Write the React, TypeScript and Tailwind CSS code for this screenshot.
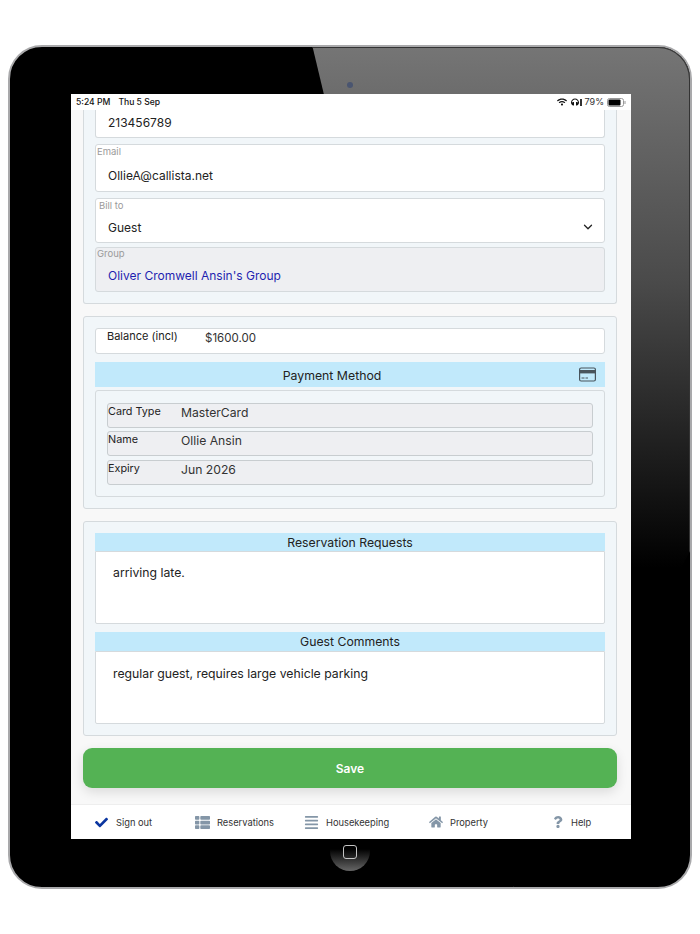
import { ChevronDown } from 'lucide-react'
import { FaAlignJustify, FaCheck, FaHeadphones, FaHome, FaQuestion, FaThList, FaWifi } from 'react-icons/fa'

function Field({ label, value, box, labelPos, textPos, gray, link, chevron }: { label: string; value: string; box: string; labelPos: string; textPos: string; gray?: boolean; link?: boolean; chevron?: boolean }) {
  return (
    <div className={`${box} relative rounded-[3px] border border-[#d5dadd] ${gray ? 'bg-[#eeeff2]' : 'bg-white'}`}>
      <div className={`${labelPos} text-[9.5px] leading-[12px] text-[#9a9a9a]`}>{label}</div>
      <div className={`${textPos} pl-[12px] text-[12px] leading-[18px] ${link ? 'text-[#1f1fb0]' : 'text-[#222]'}`}>{value}</div>
      {chevron && <ChevronDown className="absolute right-[9px] top-[21px] text-[#222]" size={14} strokeWidth={2.2} />}
    </div>
  )
}

function CardRow({ label, value, mt }: { label: string; value: string; mt: string }) {
  return (
    <div className={`${mt} flex h-[25px] rounded-[3px] border border-[#c8cdd0] bg-[#eeeff2] pt-[1px]`}>
      <div className="w-[73px] text-[10.8px] leading-[14px] text-[#222]">{label}</div>
      <div className="text-[12.2px] leading-[16px] text-[#333]">{value}</div>
    </div>
  )
}

function NavItem({ icon, label, w }: { icon: React.ReactNode; label: string; w: string }) {
  return (
    <div className={`flex items-center ${w}`}>
      {icon}
      <span className="pt-[1px] text-[9.3px] text-[#333]">{label}</span>
    </div>
  )
}

export default function App() {
  return (
    <div className="h-[934px] w-[700px] overflow-hidden bg-white pl-[8px] pt-[45px] font-['Inter',sans-serif]">
      {/* Tablet body */}
      <div className="relative h-[844px] w-[684px] rounded-[34px] border-[2px] border-[#a9a9ab] bg-black pl-[61px] pt-[47px]">
        <div
          className="absolute inset-0 rounded-[32px] shadow-[inset_0_0_0_1px_#333] [clip-path:polygon(44.5%_0,100%_0,100%_60%,74%_100%)] bg-[linear-gradient(180deg,#757575_0%,#4a4a4a_28%,#000_62%)]"
        />
        <div className="absolute left-[337px] top-[35px] size-[6px] rounded-full bg-[#4a5570]" />

        {/* Home button, its top edge goes behind the screen */}
        <div className="absolute left-[320px] top-[784px] flex size-[40px] items-center justify-center rounded-full bg-[linear-gradient(180deg,#000_45%,#666_100%)]">
          <div className="mt-[2px] size-[14px] rounded-[3px] border-[1.5px] border-[#c4c4c4]" />
        </div>

        {/* Screen */}
        <div className="relative flex h-[745px] w-[560px] flex-col overflow-hidden bg-[#f8f8f8]">
          <div className="flex h-[16px] shrink-0 items-center justify-between bg-white px-[5px] text-[8.6px] font-medium text-[#111]">
            <div className="flex gap-[8px]">
              <span>5:24 PM</span>
              <span>Thu 5 Sep</span>
            </div>
            <div className="flex items-center gap-[3px]">
              <FaWifi size={10} />
              <div className="ml-[1px] flex w-[11px] items-center gap-[1px]">
                <FaHeadphones size={8} />
                <div className="h-[7px] w-[2px] bg-[#333]" />
              </div>
              <span className="text-[9px] font-normal text-[#333]">79%</span>
              <svg width="19" height="9" viewBox="0 0 19 9">
                <rect x="0.5" y="0.5" width="16" height="8" rx="2" fill="none" stroke="#999" />
                <rect x="1.5" y="1.5" width="12" height="6" rx="1" fill="#000" />
                <rect x="17.5" y="3" width="1" height="3" fill="#999" />
              </svg>
            </div>
          </div>

          <div className="ml-[12px] mr-[14px] flex-1">
            {/* Contact card */}
            <div className="h-[194px] rounded-b-[3px] border-x border-b border-[#d5dadd] bg-[#f1f6f9] px-[11px]">
              <div className="h-[28px] rounded-b-[3px] border-x border-b border-[#d5dadd] bg-white pl-[12px] text-[12px] leading-[25px] text-[#222]">213456789</div>
              <Field box="mt-[6px] h-[48px]" labelPos="pl-[1px] pt-[1px]" textPos="pt-[9px]" label="Email" value="OllieA@callista.net" />
              <Field box="mt-[6px] h-[45px]" labelPos="pl-[3px] pt-[1px]" textPos="pt-[7px]" label="Bill to" value="Guest" chevron />
              <Field box="mt-[4px] h-[45px]" labelPos="pl-[1px]" textPos="pt-[7px]" label="Group" value="Oliver Cromwell Ansin's Group" gray link />
            </div>

            {/* Payment card */}
            <div className="mt-[12px] h-[193px] rounded-[3px] border border-[#d5dadd] bg-[#f1f6f9] px-[11px] pt-[11px]">
              <div className="flex h-[26px] rounded-[3px] border border-[#d5dadd] bg-white">
                <div className="w-[109px] pl-[11px] text-[11px] leading-[14px] text-[#222]">Balance (incl)</div>
                <div className="pt-[1px] text-[11.5px] leading-[16px] text-[#333]">$1600.00</div>
              </div>
              <div className="relative mt-[8px] h-[25px] bg-[#c1e9fb] pr-[36px] pt-[1px] text-center text-[12.3px] leading-[25px] text-[#222]">
                Payment Method
                <svg className="absolute right-[9px] top-[5px]" width="17" height="15" viewBox="0 0 17 15">
                  <rect x="0.6" y="1" width="15.8" height="13" rx="1.5" fill="none" stroke="#48545c" strokeWidth="1.2" />
                  <rect x="0.6" y="3" width="15.8" height="3.4" fill="#48545c" />
                  <path d="M2.5 11h3M6.5 11h2.5" stroke="#48545c" strokeWidth="1" />
                </svg>
              </div>
              <div className="mt-[3px] h-[107px] rounded-[3px] border border-[#d5dadd] px-[11px] pt-[12px]">
                <CardRow mt="mt-0" label="Card Type" value="MasterCard" />
                <CardRow mt="mt-[3px]" label="Name" value="Ollie Ansin" />
                <CardRow mt="mt-[4px]" label="Expiry" value="Jun 2026" />
              </div>
            </div>

            {/* Notes card */}
            <div className="mt-[12px] h-[215px] rounded-[3px] border border-[#d5dadd] bg-[#f1f6f9] px-[11px] pt-[11px]">
              <div className="h-[18px] bg-[#c1e9fb] pt-[1px] text-center text-[12.25px] leading-[18px] text-[#222]">Reservation Requests</div>
              <div className="h-[73px] rounded-b-[2px] border border-[#d5dadd] bg-white pl-[17px] pt-[12px] text-[12.25px] leading-[18px] text-[#222]">arriving late.</div>
              <div className="mt-[8px] h-[19px] bg-[#c1e9fb] text-center text-[12.25px] leading-[19px] text-[#222]">Guest Comments</div>
              <div className="h-[73px] rounded-b-[2px] border border-[#d5dadd] bg-white pl-[17px] pt-[13px] text-[12.25px] leading-[18px] text-[#222]">regular guest, requires large vehicle parking</div>
            </div>

            <button className="mt-[12px] h-[40px] w-full rounded-[9px] bg-[#54b254] pt-[1px] text-[12px] font-semibold text-white shadow-[0_4px_12px_rgba(0,0,0,0.12)]">Save</button>
          </div>

          {/* Bottom nav */}
          <div className="flex h-[35px] shrink-0 items-center border-t border-[#eeeeee] bg-white pl-[24px]">
            <NavItem w="w-[100px]" label="Sign out" icon={<FaCheck className="mr-[8px] text-[#0b36a0]" size={13} />} />
            <NavItem w="w-[109px]" label="Reservations" icon={<FaThList className="mr-[7px] text-[#8496a7]" size={15} />} />
            <NavItem w="w-[125px]" label="Housekeeping" icon={<FaAlignJustify className="mr-[7px] text-[#8496a7]" size={15} />} />
            <NavItem w="w-[123px]" label="Property" icon={<FaHome className="mr-[7px] text-[#8496a7]" size={14} />} />
            <NavItem w="w-[60px]" label="Help" icon={<FaQuestion className="mr-[7px] text-[#8496a7]" size={12} />} />
          </div>
        </div>
      </div>
    </div>
  )
}
